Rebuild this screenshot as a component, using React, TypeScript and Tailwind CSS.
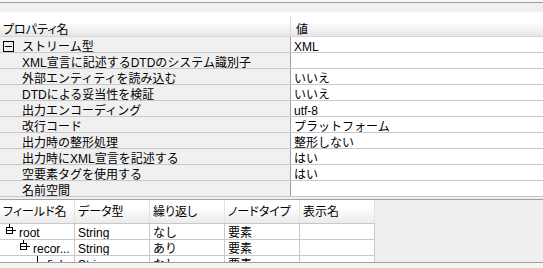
import React from "react";

const font = { fontFamily: '"Liberation Sans", "Noto Sans CJK JP", sans-serif' };

const rows: [string, string][] = [
  ["XML宣言に記述するDTDのシステム識別子", ""],
  ["外部エンティティを読み込む", "いいえ"],
  ["DTDによる妥当性を検証", "いいえ"],
  ["出力エンコーディング", "utf-8"],
  ["改行コード", "プラットフォーム"],
  ["出力時の整形処理", "整形しない"],
  ["出力時にXML宣言を記述する", "はい"],
  ["空要素タグを使用する", "はい"],
  ["名前空間", ""],
];

function MinusBox() {
  return (
    <svg width="11" height="11" viewBox="0 0 11 11" className="shrink-0 mt-[1px]">
      <rect x="0.5" y="0.5" width="10" height="10" fill="none" stroke="#000" />
      <line x1="2" y1="5.5" x2="9" y2="5.5" stroke="#000" />
    </svg>
  );
}

function TreeNode() {
  return (
    <svg width="11" height="11" viewBox="0 0 11 11" className="shrink-0">
      <line x1="4.5" y1="0" x2="4.5" y2="3" stroke="#000" />
      <rect x="1.5" y="3.5" width="6" height="6" fill="none" stroke="#000" />
      <line x1="1" y1="6.5" x2="11" y2="6.5" stroke="#000" />
    </svg>
  );
}

const cols = ["フィールド名", "データ型", "繰り返し", "ノードタイプ", "表示名"];
const trows = [
  { indent: 5, icon: "node", name: "root", type: "String", rep: "なし", node: "要素" },
  { indent: 19, icon: "node", name: "recor...", type: "String", rep: "あり", node: "要素" },
  { indent: 37, icon: "line", name: "fiel...", type: "String", rep: "なし", node: "要素" },
];

export default function App() {
  return (
    <div className="w-[543px] h-[268px] overflow-hidden bg-[#f0f0f0] text-[12px] leading-[12px] text-black" style={font}>
      <div className="h-[2px] bg-[#f5f5f5]" />
      <div className="h-[1px] bg-[#a0a0a0]" />
      <div className="h-[9px] bg-[#f0f0f0]" />
      {/* top property table */}
      <div className="bg-white">
        <div className="flex h-[25px] bg-gradient-to-b from-white from-40% to-[#e6e6e6] border-b border-[#d5d5d5]">
          <div className="w-[290px] pt-[12px] pl-[3px] whitespace-nowrap [font-feature-settings:'palt']">
            プロパティ名
          </div>
          <div className="w-[1px] mt-[4px] bg-[#dcdcdc]" />
          <div className="flex-1 pt-[12px] pl-[5px]">値</div>
        </div>
        <div className="flex h-[16px] border-b border-[#c8c8c8]">
          <div className="w-[290px] bg-[#f0f0f0] flex items-start pt-[3px] pl-[3px] gap-[8px] whitespace-nowrap">
            <MinusBox />
            <span className="pt-[1px]">ストリーム型</span>
          </div>
          <div className="w-[1px] bg-[#a0a0a0]" />
          <div className="flex-1 pt-[4px] pl-[3px]">XML</div>
        </div>
        {rows.map(([k, v], i) => (
          <div key={i} className="flex h-[16px] border-b border-[#c8c8c8]">
            <div className="w-[290px] bg-[#f0f0f0] pt-[4px] pl-[22px] whitespace-nowrap">{k}</div>
            <div className="w-[1px] bg-[#a0a0a0]" />
            <div className="flex-1 pt-[4px] pl-[3px] whitespace-nowrap">{v}</div>
          </div>
        ))}
      </div>
      <div className="h-[2px] bg-[#f0f0f0]" />
      <div className="h-[1px] bg-[#a0a0a0]" />
      {/* bottom table */}
      <div className="flex h-[62px] bg-[#efefef] overflow-hidden">
        <div className="w-[375px] flex flex-col">
          <div className="flex h-[23px] shrink-0 bg-gradient-to-b from-white from-30% to-[#ebebeb]">
            {cols.map((c) => (
              <div key={c} className="w-[75px] pt-[6px] pl-[3px] border-r border-[#e2e2e2] whitespace-nowrap overflow-hidden [font-feature-settings:'palt']">
                {c}
              </div>
            ))}
          </div>
          {trows.map((r, i) => (
            <div key={i} className="flex h-[16px] bg-white border-t border-[#c8c8c8] shrink-0">
              <div className="w-[75px] flex items-start border-r border-[#c8c8c8] overflow-hidden whitespace-nowrap" style={{ paddingLeft: r.indent }}>
                {r.icon === "node" ? (
                  <>
                    <TreeNode />
                    <span className="ml-[3px] pt-[3px]">{r.name}</span>
                  </>
                ) : (
                  <>
                    <div className="w-[1px] h-[10px] bg-black" />
                    <span className="ml-[9px] pt-[3px]">{r.name}</span>
                  </>
                )}
              </div>
              <div className="w-[75px] pt-[3px] pl-[3px] border-r border-[#c8c8c8]">{r.type}</div>
              <div className="w-[75px] pt-[3px] pl-[3px] border-r border-[#c8c8c8]">{r.rep}</div>
              <div className="w-[75px] pt-[3px] pl-[3px] border-r border-[#c8c8c8]">{r.node}</div>
              <div className="w-[75px] border-r border-[#c8c8c8]" />
            </div>
          ))}
        </div>
        <div className="flex-1" />
      </div>
      <div className="h-[1px] bg-[#a0a0a0]" />
      <div className="h-[5px] bg-[#f5f5f5]" />
    </div>
  );
}
